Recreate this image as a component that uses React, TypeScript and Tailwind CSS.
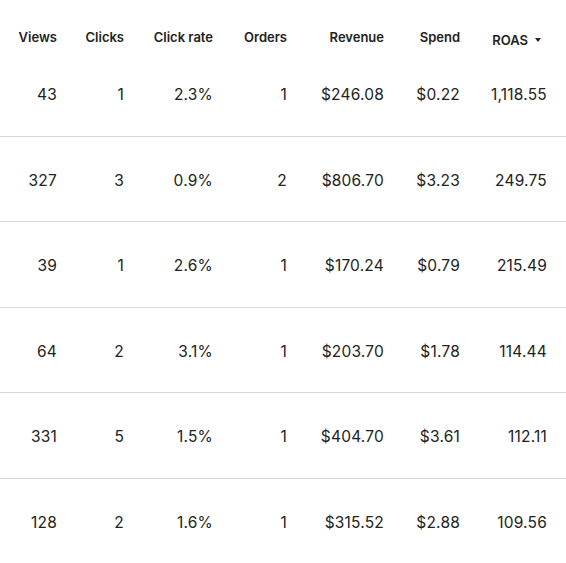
import React from 'react';

type Row = {
  views: string;
  clicks: string;
  rate: string;
  orders: string;
  revenue: string;
  spend: string;
  roas: string;
};

const ROWS: Row[] = [
  { views: '43', clicks: '1', rate: '2.3%', orders: '1', revenue: '$246.08', spend: '$0.22', roas: '1,118.55' },
  { views: '327', clicks: '3', rate: '0.9%', orders: '2', revenue: '$806.70', spend: '$3.23', roas: '249.75' },
  { views: '39', clicks: '1', rate: '2.6%', orders: '1', revenue: '$170.24', spend: '$0.79', roas: '215.49' },
  { views: '64', clicks: '2', rate: '3.1%', orders: '1', revenue: '$203.70', spend: '$1.78', roas: '114.44' },
  { views: '331', clicks: '5', rate: '1.5%', orders: '1', revenue: '$404.70', spend: '$3.61', roas: '112.11' },
  { views: '128', clicks: '2', rate: '1.6%', orders: '1', revenue: '$315.52', spend: '$2.88', roas: '109.56' },
];

// fixed column widths, every cell right aligned
const GRID = 'grid grid-cols-[57px_67px_89px_74px_97px_76px_87px] text-right';

const App: React.FC = () => {
  return (
    <div
      className="w-[566px] h-[563px] overflow-hidden bg-white text-[#222222]"
      style={{ fontFamily: 'Inter, "Liberation Sans", sans-serif' }}
    >
      {/* Header */}
      <div className={`${GRID} h-[51px] pt-[28px] text-[13px] font-semibold leading-[18px]`}>
        <div>Views</div>
        <div>Clicks</div>
        <div>Click rate</div>
        <div>Orders</div>
        <div>Revenue</div>
        <div>Spend</div>
        <div className="flex items-center justify-end gap-[7px] pr-[6px]">
          <span>ROAS</span>
          <svg width="6" height="4" viewBox="0 0 6 4" className="mt-[1px]">
            <path d="M0 0 L6 0 L3 4 Z" fill="#222222" />
          </svg>
        </div>
      </div>

      {/* Rows */}
      {ROWS.map((r, i) => (
        <div
          key={i}
          className={`${GRID} h-[85.5px] items-center pt-[4px] text-[15.5px] tracking-[0.2px] leading-5 ${
            i < ROWS.length - 1 ? 'border-b border-[#d6d6d6]' : ''
          }`}
        >
          <div>{r.views}</div>
          <div>{r.clicks}</div>
          <div>{r.rate}</div>
          <div>{r.orders}</div>
          <div>{r.revenue}</div>
          <div>{r.spend}</div>
          <div>{r.roas}</div>
        </div>
      ))}
    </div>
  );
};

export default App;
